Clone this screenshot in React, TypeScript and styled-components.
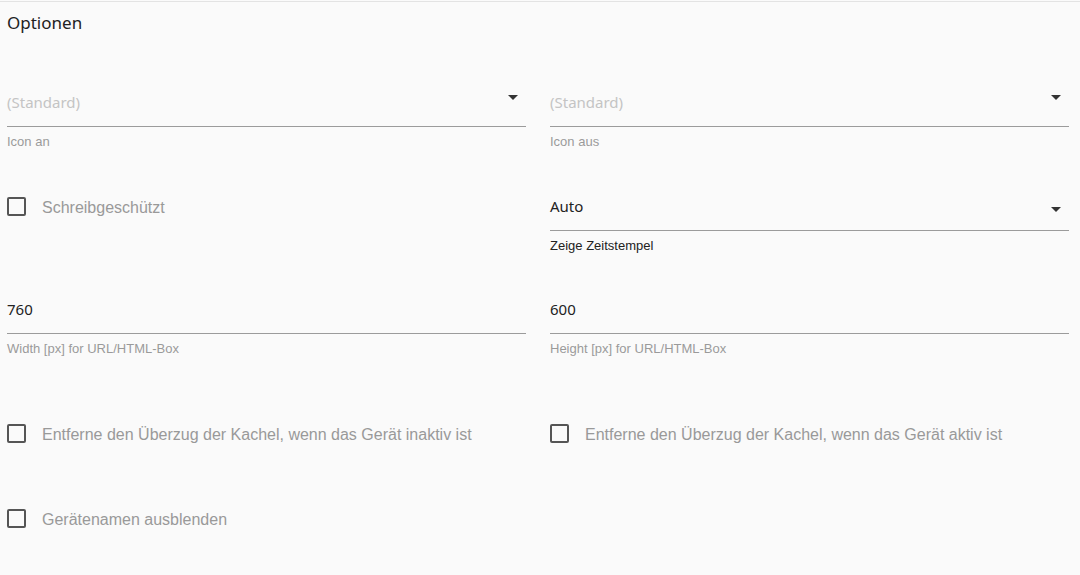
import React from 'react';
import styled, { createGlobalStyle } from 'styled-components';

const GlobalStyle = createGlobalStyle`
  html, body {
    margin: 0;
    padding: 0;
    background: #fafafa;
  }
  body {
    font-family: "Liberation Sans", Arial, sans-serif;
  }
`;

const Page = styled.div`
  margin-top: 1px;
  border-top: 1px solid #e3e3e3;
  padding: 0 11px 20px 7px;
  height: 572px;
  box-sizing: border-box;
`;

const Title = styled.div`
  padding-top: 11px;
  font-family: "Noto Sans", sans-serif;
  font-size: 17px;
  line-height: 20px;
  color: #222;
`;

const Row = styled.div<{ $top: number }>`
  display: grid;
  grid-template-columns: 1fr 1fr;
  column-gap: 24px;
  align-items: start;
  margin-top: ${({ $top }) => $top}px;
`;

const Field = styled.div`
  display: flex;
  flex-direction: column;
`;

const InputRow = styled.div`
  display: flex;
  align-items: flex-start;
  padding: 4px 0 14px;
  border-bottom: 1px solid #9b9b9b;
`;

const Value = styled.div<{ $placeholder?: boolean }>`
  flex: 1;
  font-family: "Noto Sans", sans-serif;
  font-size: 15px;
  line-height: 20px;
  color: ${({ $placeholder }) => ($placeholder ? '#c4c4c4' : '#222')};
`;

const Arrow = styled.svg<{ $offset: number }>`
  width: 10px;
  height: 5px;
  margin: ${({ $offset }) => $offset}px 8px 0 0;
  fill: #333;
  flex-shrink: 0;
`;

const Helper = styled.div<{ $dark?: boolean }>`
  margin-top: 8px;
  font-size: 13px;
  line-height: 14px;
  color: ${({ $dark }) => ($dark ? '#222' : '#9a9a9a')};
`;

const CheckRow = styled.label`
  display: flex;
  align-items: center;
  padding-top: 4px;
  height: 20px;
  cursor: pointer;
`;

const Box = styled.span`
  width: 15px;
  height: 15px;
  border: 2px solid #555;
  border-radius: 2px;
  flex-shrink: 0;
`;

const CheckLabel = styled.span`
  margin-left: 16px;
  padding-top: 3px;
  font-size: 16px;
  line-height: 20px;
  color: #999;
`;

const DropArrow = ({ offset }: { offset: number }) => (
  <Arrow $offset={offset} viewBox="0 0 10 5">
    <path d="M0 0l5 5 5-5z" />
  </Arrow>
);

const SelectField = ({
  value,
  placeholder,
  helper,
  dark,
  arrowOffset,
}: {
  value: string;
  placeholder?: boolean;
  helper: string;
  dark?: boolean;
  arrowOffset: number;
}) => (
  <Field>
    <InputRow>
      <Value $placeholder={placeholder}>{value}</Value>
      <DropArrow offset={arrowOffset} />
    </InputRow>
    <Helper $dark={dark}>{helper}</Helper>
  </Field>
);

const TextField = ({ value, helper }: { value: string; helper: string }) => (
  <Field>
    <InputRow>
      <Value>{value}</Value>
    </InputRow>
    <Helper>{helper}</Helper>
  </Field>
);

const Check = ({ label }: { label: string }) => (
  <CheckRow>
    <Box />
    <CheckLabel>{label}</CheckLabel>
  </CheckRow>
);

export default function App() {
  return (
    <>
      <GlobalStyle />
      <Page>
        <Title>Optionen</Title>
        <Row $top={55}>
          <SelectField value="(Standard)" placeholder helper="Icon an" arrowOffset={3} />
          <SelectField value="(Standard)" placeholder helper="Icon aus" arrowOffset={3} />
        </Row>
        <Row $top={43}>
          <Check label="Schreibgeschützt" />
          <SelectField value="Auto" helper="Zeige Zeitstempel" dark arrowOffset={11} />
        </Row>
        <Row $top={42}>
          <TextField value="760" helper="Width [px] for URL/HTML-Box" />
          <TextField value="600" helper="Height [px] for URL/HTML-Box" />
        </Row>
        <Row $top={63}>
          <Check label="Entferne den Überzug der Kachel, wenn das Gerät inaktiv ist" />
          <Check label="Entferne den Überzug der Kachel, wenn das Gerät aktiv ist" />
        </Row>
        <Row $top={61}>
          <Check label="Gerätenamen ausblenden" />
        </Row>
      </Page>
    </>
  );
}
